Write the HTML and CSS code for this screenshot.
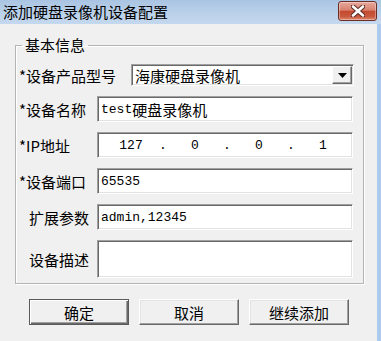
FILE: index.html
```html
<!DOCTYPE html>
<html lang="zh-CN">
<head>
  <meta charset="UTF-8">
  <title>添加硬盘录像机设备配置</title>
  <link rel="stylesheet" href="styles.css">
</head>
<body>
  <div class="window">
    <!-- 标题栏 -->
    <div class="titlebar">
      <span class="title">添加硬盘录像机设备配置</span>
      <button class="close-btn" type="button">
        <svg width="14" height="12" viewBox="0 0 14 12">
          <path d="M2 1.5 L12 10.5 M12 1.5 L2 10.5" stroke="#5a2a24" stroke-width="4.6" stroke-linecap="round"/>
          <path d="M2 1.5 L12 10.5 M12 1.5 L2 10.5" stroke="#fff" stroke-width="2.6" stroke-linecap="round"/>
        </svg>
      </button>
    </div>

    <!-- 客户区 -->
    <div class="client">
      <fieldset class="group">
        <legend>基本信息</legend>

        <div class="row first">
          <label class="label wide">*设备产品型号</label>
          <div class="combo">
            <span class="value cjk">海康硬盘录像机</span>
            <span class="combo-btn">
              <svg width="9" height="5" viewBox="0 0 9 5"><path d="M0 0 H9 L4.5 5 Z" fill="#000"/></svg>
            </span>
          </div>
        </div>

        <div class="row">
          <label class="label">*设备名称</label>
          <div class="field"><span class="value">test</span><span class="value cjk">硬盘录像机</span></div>
        </div>

        <div class="row">
          <label class="label">*IP地址</label>
          <div class="field ip">
            <span class="seg">127</span><span class="dot">.</span>
            <span class="seg">0</span><span class="dot">.</span>
            <span class="seg">0</span><span class="dot">.</span>
            <span class="seg">1</span>
          </div>
        </div>

        <div class="row">
          <label class="label">*设备端口</label>
          <div class="field"><span class="value">65535</span></div>
        </div>

        <div class="row">
          <label class="label plain">扩展参数</label>
          <div class="field"><span class="value">admin,12345</span></div>
        </div>

        <div class="row">
          <label class="label plain">设备描述</label>
          <div class="field tall"></div>
        </div>
      </fieldset>

      <div class="buttons">
        <button class="btn default" type="button">确定</button>
        <button class="btn" type="button">取消</button>
        <button class="btn" type="button">继续添加</button>
      </div>
    </div>
  </div>
</body>
</html>
```

FILE: styles.css
```css
body {
    margin: 0;
    padding: 0;
    font-family: "Noto Sans CJK SC", "Liberation Sans", sans-serif;
    font-size: 15px;
    color: #000;
    background: #f0f0f0;
}

.window {
    width: 381px;
    height: 341px;
    background: #aacbec;
    display: flex;
    flex-direction: column;
    overflow: hidden;
}

/* 标题栏 */
.titlebar {
    height: 24px;
    display: flex;
    align-items: center;
    justify-content: space-between;
    background: linear-gradient(#a9c4e2, #bcd2ea 60%, #c4d8ee);
}

.title {
    padding-left: 3px;
    line-height: 24px;
}

.close-btn {
    align-self: flex-start;
    margin-top: 1px;
    margin-right: 4px;
    width: 39px;
    height: 20px;
    padding: 0;
    border: 1px solid #6b2e27;
    border-radius: 3px;
    background: linear-gradient(#e8a89b 0%, #d8826f 45%, #c44b32 52%, #c9583d 80%, #dc8a70 100%);
    box-shadow: inset 0 0 0 1px rgba(255, 255, 255, 0.35);
    display: flex;
    align-items: center;
    justify-content: center;
}

/* 客户区 */
.client {
    flex: 1;
    margin-right: 4px;
    background: #f0f0f0;
    padding: 11px 0 0 15px;
}

.group {
    width: 349px;
    box-sizing: border-box;
    margin: 0;
    padding: 0 0 5px 3px;
    border: 1px solid #b4b4b4;
    box-shadow: 1px 1px 0 #fff, inset 1px 1px 0 #fff;
}

.group legend {
    margin-left: 3px;
    padding: 0 3px;
    line-height: 20px;
}

.row {
    display: flex;
    align-items: center;
    margin-top: 10px;
}

.row.first {
    margin-top: 9px;
}

.label {
    width: 78px;
    flex-shrink: 0;
    white-space: nowrap;
}

.label.wide {
    width: 112px;
}

.label.plain {
    padding-left: 10px;
    box-sizing: border-box;
}

/* 凹陷输入框 */
.field,
.combo {
    box-sizing: border-box;
    background: #fff;
    border: 1px solid;
    border-color: #a0a0a0 #fff #fff #a0a0a0;
    box-shadow: inset 1px 1px 0 #696969, inset -1px -1px 0 #e3e3e3;
    display: flex;
    align-items: center;
    padding-left: 3px;
}

.field {
    width: 256px;
    height: 26px;
}

.field.tall {
    height: 38px;
}

.value {
    font-family: "Liberation Mono", "Noto Sans CJK SC", monospace;
    font-size: 13px;
    white-space: pre;
}

.value.cjk {
    font-family: "Noto Sans CJK SC", sans-serif;
    font-size: 15px;
}

.field.ip {
    padding-left: 9px;
}

.seg,
.dot {
    font-family: "Liberation Mono", monospace;
    font-size: 13px;
    text-align: center;
}

.seg {
    width: 48px;
}

.dot {
    width: 16px;
}

.combo {
    width: 223px;
    height: 22px;
    justify-content: space-between;
    padding-right: 1px;
}

.combo-btn {
    width: 20px;
    height: 18px;
    box-sizing: border-box;
    background: #f0f0f0;
    border: 1px solid;
    border-color: #fff #696969 #696969 #fff;
    box-shadow: inset -1px -1px 0 #a0a0a0;
    display: flex;
    align-items: center;
    justify-content: center;
}

/* 底部按钮 */
.buttons {
    display: flex;
    gap: 10px;
    margin: 15px 0 0 14px;
}

.btn {
    width: 100px;
    height: 26px;
    padding: 0;
    font-family: "Noto Sans CJK SC", sans-serif;
    font-size: 15px;
    color: #000;
    background: #f0f0f0;
    border: 1px solid;
    border-color: #fff #696969 #696969 #fff;
    box-shadow: inset -1px -1px 0 #a0a0a0, inset 1px 1px 0 #e3e3e3;
}

.btn.default {
    border-color: #5a5a5a;
    box-shadow: inset 1px 1px 0 #fff, inset -1px -1px 0 #696969, inset -2px -2px 0 #a0a0a0;
}
```
